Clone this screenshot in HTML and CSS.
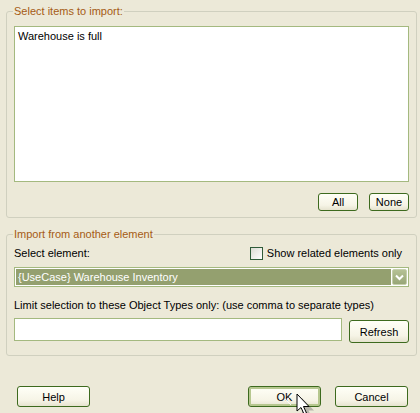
FILE: index.html
```html
<!DOCTYPE html>
<html lang="en">
<head>
    <meta charset="UTF-8">
    <title>Import</title>
    <link rel="stylesheet" href="styles.css">
</head>
<body>
    <div class="dialog">
        <fieldset class="group group-items">
            <legend>Select items to import:</legend>
            <div class="listbox">Warehouse is full</div>
            <div class="row-end">
                <button class="btn btn-small">All</button>
                <button class="btn btn-small">None</button>
            </div>
        </fieldset>

        <fieldset class="group group-element">
            <legend>Import from another element</legend>
            <div class="row-between">
                <span>Select element:</span>
                <label class="check"><span class="box"></span>Show related elements only</label>
            </div>
            <div class="combo">
                <span class="combo-text">{UseCase} Warehouse Inventory</span>
                <span class="combo-btn">
                    <svg width="9" height="7" viewBox="0 0 9 7"><path d="M1 1.5 L4.5 5 L8 1.5" fill="none" stroke="#fff" stroke-width="2"/></svg>
                </span>
            </div>
            <div class="hint">Limit selection to these Object Types only: (use comma to separate types)</div>
            <div class="row-input">
                <div class="textbox"></div>
                <button class="btn btn-refresh">Refresh</button>
            </div>
        </fieldset>

        <div class="footer">
            <button class="btn btn-wide">Help</button>
            <div class="footer-right">
                <button class="btn btn-wide btn-default">OK</button>
                <button class="btn btn-wide">Cancel</button>
            </div>
        </div>

        <!-- mouse pointer over the OK button -->
        <svg class="cursor" width="40" height="30" viewBox="0 0 40 30">
            <g stroke="#fff" stroke-opacity="0.8" stroke-width="1">
                <line x1="-12" y1="-6" x2="6" y2="12"/>
                <line x1="18" y1="-8" x2="-6" y2="14"/>
            </g>
            <path d="M14 2 L14 19 L18 15.5 L21 22 L23.5 21 L20.5 14.5 L26 14.5 Z" fill="#555" opacity="0.35" transform="translate(3 3)"/>
            <path d="M12 1 L12 18 L16 14.5 L19 21 L21.5 20 L18.5 13.5 L24 13.5 Z" fill="#fff" stroke="#000" stroke-width="1"/>
        </svg>
    </div>
</body>
</html>
```

FILE: styles.css
```css
body {
    margin: 0;
    background-color: #ece9d8;
    font-family: 'Liberation Sans', Arial, sans-serif;
    font-size: 11px;
    color: #000;
}
.dialog {
    position: relative;
    width: 420px;
    height: 413px;
    padding-top: 5px;
    box-sizing: border-box;
    overflow: hidden;
}
.group {
    margin: 0 3px 0 6px;
    border: 1px solid #d0d0bf;
    border-radius: 3px;
    padding: 8px 7px 6px 7px;
}
.group legend {
    color: #a55b14;
    padding: 0 1px;
    margin-left: -1px;
    line-height: 13px;
}
.listbox {
    height: 148px;
    border: 1px solid #a4b97f;
    background: #fff;
    padding: 3px 3px;
    box-sizing: content-box;
    line-height: 13px;
}
.row-end {
    display: flex;
    justify-content: flex-end;
    gap: 11px;
    margin-top: 11px;
}
.btn {
    font-family: 'Liberation Sans', Arial, sans-serif;
    font-size: 11px;
    color: #000;
    border: 1px solid #3d6a1e;
    border-radius: 3px;
    background: linear-gradient(#fffff7, #f6f4e6 70%, #e6e3cf);
    padding: 0;
    box-sizing: border-box;
}
.btn-small {
    width: 40px;
    height: 18px;
}
.group-element {
    margin-top: 10px;
    padding-top: 5px;
    padding-bottom: 12px;
}
.row-between {
    display: flex;
    justify-content: space-between;
    align-items: center;
    height: 14px;
    padding-right: 7px;
}
.check {
    display: flex;
    align-items: center;
    gap: 4px;
}
.box {
    width: 11px;
    height: 11px;
    border: 1px solid #2f5b38;
    background: linear-gradient(135deg, #dcdcd3, #fff);
}
.combo {
    display: flex;
    align-items: center;
    justify-content: space-between;
    margin-top: 7px;
    height: 20px;
    border: 1px solid #a4b97f;
    background: #fff;
    padding: 1px;
    box-sizing: border-box;
}
.combo-text {
    flex: 1;
    height: 16px;
    line-height: 16px;
    background: #94a06f;
    color: #fff;
    padding-left: 2px;
    margin-right: 1px;
}
.combo-btn {
    width: 15px;
    height: 16px;
    display: flex;
    align-items: center;
    justify-content: center;
    background: linear-gradient(#b5c195, #98a677);
    border: 1px solid #c5cfac;
    box-sizing: border-box;
    border-radius: 2px;
}
.hint {
    margin-top: 12px;
    line-height: 13px;
}
.row-input {
    display: flex;
    align-items: flex-start;
    gap: 7px;
    margin-top: 6px;
}
.textbox {
    flex: 1;
    height: 23px;
    border: 1px solid #a4b97f;
    background: #fff;
    box-sizing: border-box;
}
.btn-refresh {
    width: 60px;
    height: 23px;
    margin-top: 2px;
}
.footer {
    display: flex;
    justify-content: space-between;
    margin-top: 30px;
    padding: 0 12px 0 17px;
}
.footer-right {
    display: flex;
    gap: 14px;
}
.btn-wide {
    width: 73px;
    height: 21px;
}
.btn-default {
    box-shadow: inset 0 0 0 2px #b6c78f;
}
.cursor {
    position: absolute;
    left: 285px;
    top: 393px;
}
```
